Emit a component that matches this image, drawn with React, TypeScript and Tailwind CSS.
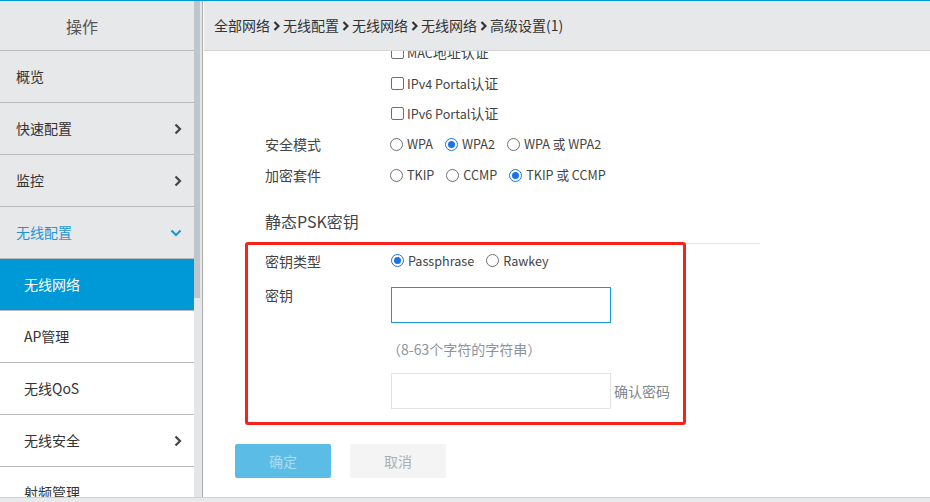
import React from "react";

const Chevron = ({ cls = "" }: { cls?: string }) => (
  <svg width="8" height="12" viewBox="0 0 8 12" className={cls}>
    <path d="M1.5 1.5 L6 6 L1.5 10.5" fill="none" stroke="currentColor" strokeWidth="2.2" />
  </svg>
);

const Down = () => (
  <svg width="12" height="8" viewBox="0 0 12 8" className="text-[#1f96d3]">
    <path d="M1.5 1.5 L6 6 L10.5 1.5" fill="none" stroke="currentColor" strokeWidth="2.2" />
  </svg>
);

const Crumb = () => (
  <svg width="7" height="10" viewBox="0 0 7 10" className="mx-[3px] text-[#333]">
    <path d="M1.5 1 L5.5 5 L1.5 9" fill="none" stroke="currentColor" strokeWidth="2.2" />
  </svg>
);

const Radio = ({ on, label }: { on?: boolean; label: string }) => (
  <span className="flex items-center mr-[12px]">
    <span
      className={
        "w-[13px] h-[13px] rounded-full border flex items-center justify-center bg-white " +
        (on ? "border-[#1a73e8]" : "border-[#6f6f6f]")
      }
    >
      {on && <span className="w-[7px] h-[7px] rounded-full bg-[#1a73e8]" />}
    </span>
    <span className="ml-[4px] text-[12.6px]">{label}</span>
  </span>
);

const Check = ({ latin, cjk }: { latin: string; cjk: string }) => (
  <span className="flex items-center">
    <span className="w-[13px] h-[13px] rounded-[2px] border border-[#6f6f6f] bg-white" />
    <span className="ml-[3px]">
      <span className="text-[12.6px]">{latin}</span>
      <span>{cjk}</span>
    </span>
  </span>
);

const SideRow = ({
  label,
  right,
  active,
  sub,
  selected,
}: {
  label: string;
  right?: React.ReactNode;
  active?: boolean;
  sub?: boolean;
  selected?: boolean;
}) => (
  <div
    className={
      "h-[52px] shrink-0 border-b border-[#b9bbbd] flex items-center justify-between pr-[12px] text-[14px] " +
      (sub ? "pl-[24px] " : "pl-[16px] ") +
      (selected
        ? "bg-[#0099d8] text-white"
        : sub
        ? "bg-white text-[#333]"
        : active
        ? "bg-[#e6e8ea] text-[#1f96d3]"
        : "bg-[#e6e8ea] text-[#333]")
    }
  >
    <span>{label}</span>
    {right}
  </div>
);

export default function App() {
  return (
    <div className="w-[930px] h-[502px] overflow-hidden bg-white flex flex-col font-['Noto_Sans_CJK_SC',sans-serif]">
      <div className="h-px bg-[#0096d6] shrink-0" />
      <div className="flex h-[496px] shrink-0">
        <aside className="w-[194px] shrink-0 bg-[#e6e8ea] flex flex-col overflow-hidden">
          <div className="h-[50px] shrink-0 border-b border-[#b9bbbd] flex items-center justify-center pr-[30px] text-[16px] text-[#555]">
            操作
          </div>
          <SideRow label="概览" />
          <SideRow label="快速配置" right={<Chevron cls="text-[#444]" />} />
          <SideRow label="监控" right={<Chevron cls="text-[#444]" />} />
          <SideRow label="无线配置" active right={<Down />} />
          <SideRow label="无线网络" sub selected />
          <SideRow label="AP管理" sub />
          <SideRow label="无线QoS" sub />
          <SideRow label="无线安全" sub right={<Chevron cls="text-[#444]" />} />
          <SideRow label="射频管理" sub />
        </aside>
        <div className="w-[8px] shrink-0 bg-[#e4e6e8]">
          <div className="w-[6px] h-[297px] bg-[#bdc6cd]" />
        </div>
        <main className="flex-1 border-l border-[#a9abad] flex flex-col min-w-0">
          <div className="ml-px h-[50px] shrink-0 bg-[#e6e8ea] border-b border-[#d2d4d6] flex items-center pl-[10px] text-[14px] text-[#333]">
            <span>全部网络</span>
            <Crumb />
            <span>无线配置</span>
            <Crumb />
            <span>无线网络</span>
            <Crumb />
            <span>无线网络</span>
            <Crumb />
            <span>高级设置(1)</span>
          </div>
          <div className="flex-1 overflow-hidden">
            <div className="-mt-[14px] text-[14px] text-[#444]">
              <div className="h-[31px] flex items-center pl-[188px]">
                <Check latin="MAC" cjk="地址认证" />
              </div>
              <div className="h-[30px] flex items-center pl-[188px]">
                <Check latin="IPv4 Portal" cjk="认证" />
              </div>
              <div className="h-[31px] flex items-center pl-[188px]">
                <Check latin="IPv6 Portal" cjk="认证" />
              </div>
              <div className="h-[31px] flex items-center pl-[62px]">
                <span className="w-[125px]">安全模式</span>
                <Radio label="WPA" />
                <Radio label="WPA2" on />
                <Radio label="WPA 或 WPA2" />
              </div>
              <div className="h-[31px] flex items-center pl-[62px]">
                <span className="w-[125px]">加密套件</span>
                <Radio label="TKIP" />
                <Radio label="CCMP" />
                <Radio label="TKIP 或 CCMP" on />
              </div>
              <div className="ml-[42px] w-[515px] pl-[20px] pt-[20px] pb-[12px] border-b border-[#e4e6e8] text-[16px] leading-[20px] text-[#444]">
                静态PSK密钥
              </div>
              <div className="ml-[42px] w-[441px] -mt-[2px] border-[3px] border-[#f5231b] rounded-[3px] pl-[17px] pb-[13px]">
                <div className="h-[32px] flex items-center">
                  <span className="w-[126px]">密钥类型</span>
                  <Radio label="Passphrase" on />
                  <Radio label="Rawkey" />
                </div>
                <div className="mt-[10px] flex items-start">
                  <span className="w-[126px] leading-[16px]">密钥</span>
                  <div className="w-[220px] h-[36px] border border-[#1a9ad6] bg-white" />
                </div>
                <div className="mt-[16px] h-[20px] leading-[20px] pl-[122px] text-[#8a949c]">
                  （8-63个字符的字符串）
                </div>
                <div className="mt-[14px] flex items-center pl-[126px]">
                  <div className="w-[220px] h-[36px] border border-[#e2e2e2] bg-white" />
                  <span className="ml-[3px] text-[#7d8790]">确认密码</span>
                </div>
              </div>
              <div className="mt-[19px] ml-[32px] flex gap-[19px]">
                <div className="w-[96px] h-[34px] rounded-[2px] bg-[#5bbde6] text-[#a9dcf0] flex items-center justify-center text-[14px]">
                  确定
                </div>
                <div className="w-[96px] h-[34px] rounded-[2px] bg-[#f4f4f4] text-[#a9b0b6] flex items-center justify-center text-[14px]">
                  取消
                </div>
              </div>
            </div>
          </div>
        </main>
      </div>
      <div className="h-[5px] shrink-0 border-t border-[#cfd1d3] bg-[#e8e9ea]" />
    </div>
  );
}
